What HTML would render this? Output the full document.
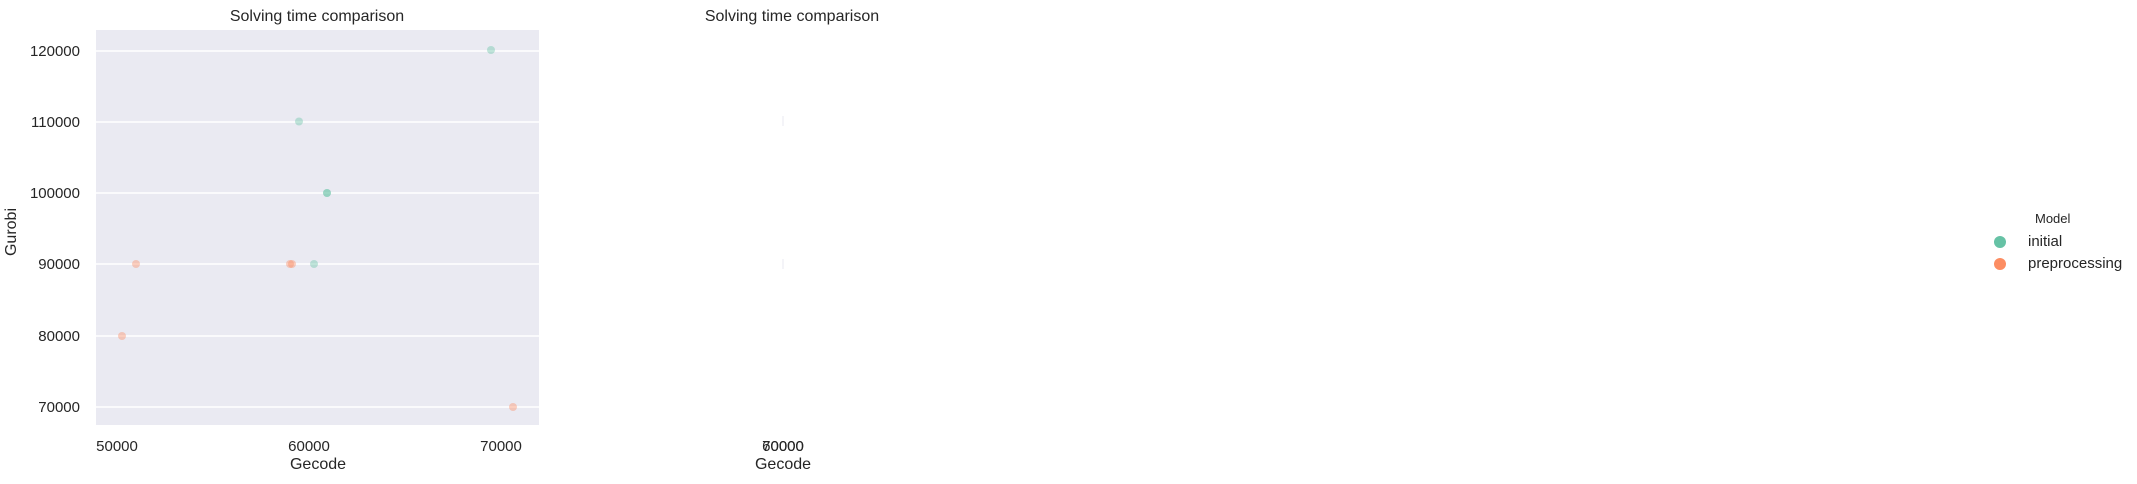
<!DOCTYPE html>
<html><head><style>
body{margin:0;background:#fff;width:2137px;height:484px;overflow:hidden;position:relative;font-family:"Liberation Sans",sans-serif;color:#262626}
.t{position:absolute;white-space:nowrap;line-height:1}
</style></head><body>
<svg width="2137" height="484" style="position:absolute;left:0;top:0">
<rect x="96" y="30" width="443" height="395" fill="#eaeaf2"/>
<g stroke="#fff" stroke-width="1.5">
<line x1="96" x2="539" y1="51" y2="51"/><line x1="96" x2="539" y1="122" y2="122"/>
<line x1="96" x2="539" y1="193" y2="193"/><line x1="96" x2="539" y1="264" y2="264"/>
<line x1="96" x2="539" y1="336" y2="336"/><line x1="96" x2="539" y1="407" y2="407"/>
</g>
<g fill="#66c2a5" fill-opacity="0.4">
<circle cx="491" cy="50" r="4"/><circle cx="299" cy="121.5" r="4"/><circle cx="327" cy="193" r="4"/><circle cx="327" cy="193" r="4"/><circle cx="314" cy="264" r="4"/>
</g>
<g fill="#fc8d62" fill-opacity="0.4">
<circle cx="136" cy="264" r="4"/><circle cx="290" cy="264" r="4"/><circle cx="292" cy="264" r="4"/><circle cx="122" cy="336" r="4"/><circle cx="513" cy="407" r="4"/>
</g>
<line x1="783" x2="783" y1="116" y2="126" stroke="#eaeaf2"/>
<line x1="783" x2="783" y1="259" y2="269" stroke="#eaeaf2"/>
<circle cx="2000" cy="242" r="6" fill="#66c2a5"/>
<circle cx="2000" cy="264" r="6" fill="#fc8d62"/>
</svg>
<div class="t" style="left:217px;top:9px;font-size:16px;width:200px;text-align:center">Solving time comparison</div>
<div class="t" style="left:692px;top:9px;font-size:16px;width:200px;text-align:center">Solving time comparison</div>
<div class="t" style="left:15px;top:44px;font-size:15px;width:65px;text-align:right">120000</div>
<div class="t" style="left:15px;top:115px;font-size:15px;width:65px;text-align:right">110000</div>
<div class="t" style="left:15px;top:186px;font-size:15px;width:65px;text-align:right">100000</div>
<div class="t" style="left:15px;top:257px;font-size:15px;width:65px;text-align:right">90000</div>
<div class="t" style="left:15px;top:329px;font-size:15px;width:65px;text-align:right">80000</div>
<div class="t" style="left:15px;top:400px;font-size:15px;width:65px;text-align:right">70000</div>
<div class="t" style="left:77px;top:439px;font-size:15px;width:80px;text-align:center">50000</div>
<div class="t" style="left:269px;top:439px;font-size:15px;width:80px;text-align:center">60000</div>
<div class="t" style="left:461px;top:439px;font-size:15px;width:80px;text-align:center">70000</div>
<div class="t" style="left:743px;top:439px;font-size:15px;width:80px;text-align:center">60000</div>
<div class="t" style="left:743px;top:439px;font-size:15px;width:80px;text-align:center">70000</div>
<div class="t" style="left:268px;top:457px;font-size:16px;width:100px;text-align:center">Gecode</div>
<div class="t" style="left:733px;top:457px;font-size:16px;width:100px;text-align:center">Gecode</div>
<div class="t" style="left:-28px;top:224px;font-size:16px;width:80px;text-align:center;transform:rotate(-90deg)">Gurobi</div>
<div class="t" style="left:2035px;top:212px;font-size:13px">Model</div>
<div class="t" style="left:2028px;top:234px;font-size:15px">initial</div>
<div class="t" style="left:2028px;top:256px;font-size:15px">preprocessing</div>
</body></html>
